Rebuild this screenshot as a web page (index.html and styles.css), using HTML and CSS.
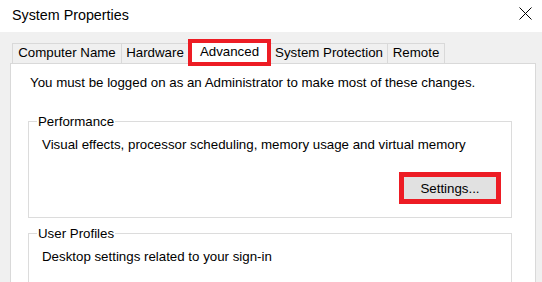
FILE: index.html
```html
<!DOCTYPE html>
<html lang="en">
<head>
    <meta charset="UTF-8">
    <title>System Properties</title>
    <link rel="stylesheet" href="styles.css">
</head>
<body>

    <!-- Title Bar -->
    <div class="titlebar">
        <span class="title">System Properties</span>
        <span class="close">
            <svg width="13" height="13" viewBox="0 0 13 13">
                <path d="M0.5 0.5 L12.5 12.5 M12.5 0.5 L0.5 12.5" stroke="#000" stroke-width="1" fill="none"/>
            </svg>
        </span>
    </div>

    <!-- Dialog Body -->
    <div class="dialog">
        <div class="tabs">
            <div class="tab tab-name">Computer Name</div>
            <div class="tab tab-hw">Hardware</div>
            <div class="tab tab-adv active">Advanced</div>
            <div class="tab tab-sp">System Protection</div>
            <div class="tab tab-remote">Remote</div>
        </div>

        <div class="panel">
            <p class="notice">You must be logged on as an Administrator to make most of these changes.</p>

            <fieldset class="group">
                <legend>Performance</legend>
                <p class="group-text">Visual effects, processor scheduling, memory usage and virtual memory</p>
                <div class="group-actions">
                    <button class="btn highlight">Settings...</button>
                </div>
            </fieldset>

            <fieldset class="group group-open">
                <legend>User Profiles</legend>
                <p class="group-text">Desktop settings related to your sign-in</p>
            </fieldset>
        </div>
    </div>

</body>
</html>
```

FILE: styles.css
```css
/* Global Styles */
body {
    margin: 0;
    width: 542px;
    height: 282px;
    overflow: hidden;
    font-family: "Liberation Sans", Arial, sans-serif;
    font-size: 13.3px;
    color: #000;
    background: #f0f0f0;
}

/* Title Bar */
.titlebar {
    height: 32px;
    background: #fff;
    display: flex;
    align-items: center;
    justify-content: space-between;
    padding: 0 10px 0 12px;
}

.title {
    font-size: 14.3px;
    margin-top: -3px;
}

.close svg {
    display: block;
    margin-top: -6px;
}

/* Dialog */
.dialog {
    padding: 7px 6px 0 10px;
}

/* Tabs */
.tabs {
    display: flex;
    align-items: flex-end;
    margin-left: 2px;
}

.tab {
    box-sizing: border-box;
    height: 20px;
    line-height: 18px;
    border: 1px solid #d9d9d9;
    border-bottom: none;
    margin-right: -1px;
    text-align: center;
    background: #f0f0f0;
}

.tab-name { width: 110px; }
.tab-hw { width: 68px; }
.tab-adv { width: 83px; }
.tab-sp { width: 118px; }
.tab-remote { width: 58px; }

.tab.active {
    height: 27px;
    margin-bottom: -3px;
    border: 4px solid #ed1c24;
    background: #fff;
    line-height: 18px;
    position: relative;
    z-index: 1;
}

/* Panel */
.panel {
    box-sizing: border-box;
    width: 526px;
    height: 240px;
    padding: 0 0 0 17px;
    background: #fff;
    border: 1px solid #d9d9d9;
}

.notice {
    margin: 10px 0 0 2px;
    line-height: 17px;
}

/* Group Boxes */
.group {
    width: 484px;
    box-sizing: border-box;
    border: 1px solid #dcdcdc;
    margin: 22px 0 0 0;
    padding: 0 10px 0 13px;
}

.group + .group {
    margin-top: 7px;
}

.group-open {
    height: 80px;
}

.group legend {
    padding: 0 1px;
    margin-left: -5px;
    line-height: 17px;
}

.group-text {
    margin: 6px 0 0 0;
    line-height: 17px;
}

.group-actions {
    display: flex;
    justify-content: flex-end;
    margin: 19px 0 13px 0;
}

/* Button */
.btn {
    box-sizing: border-box;
    width: 102px;
    height: 32px;
    font-family: inherit;
    font-size: 13.3px;
    color: #000;
    background: #e1e1e1;
    border: 1px solid #adadad;
    padding: 0;
}

.btn.highlight {
    border: 5px solid #ed1c24;
}
```
